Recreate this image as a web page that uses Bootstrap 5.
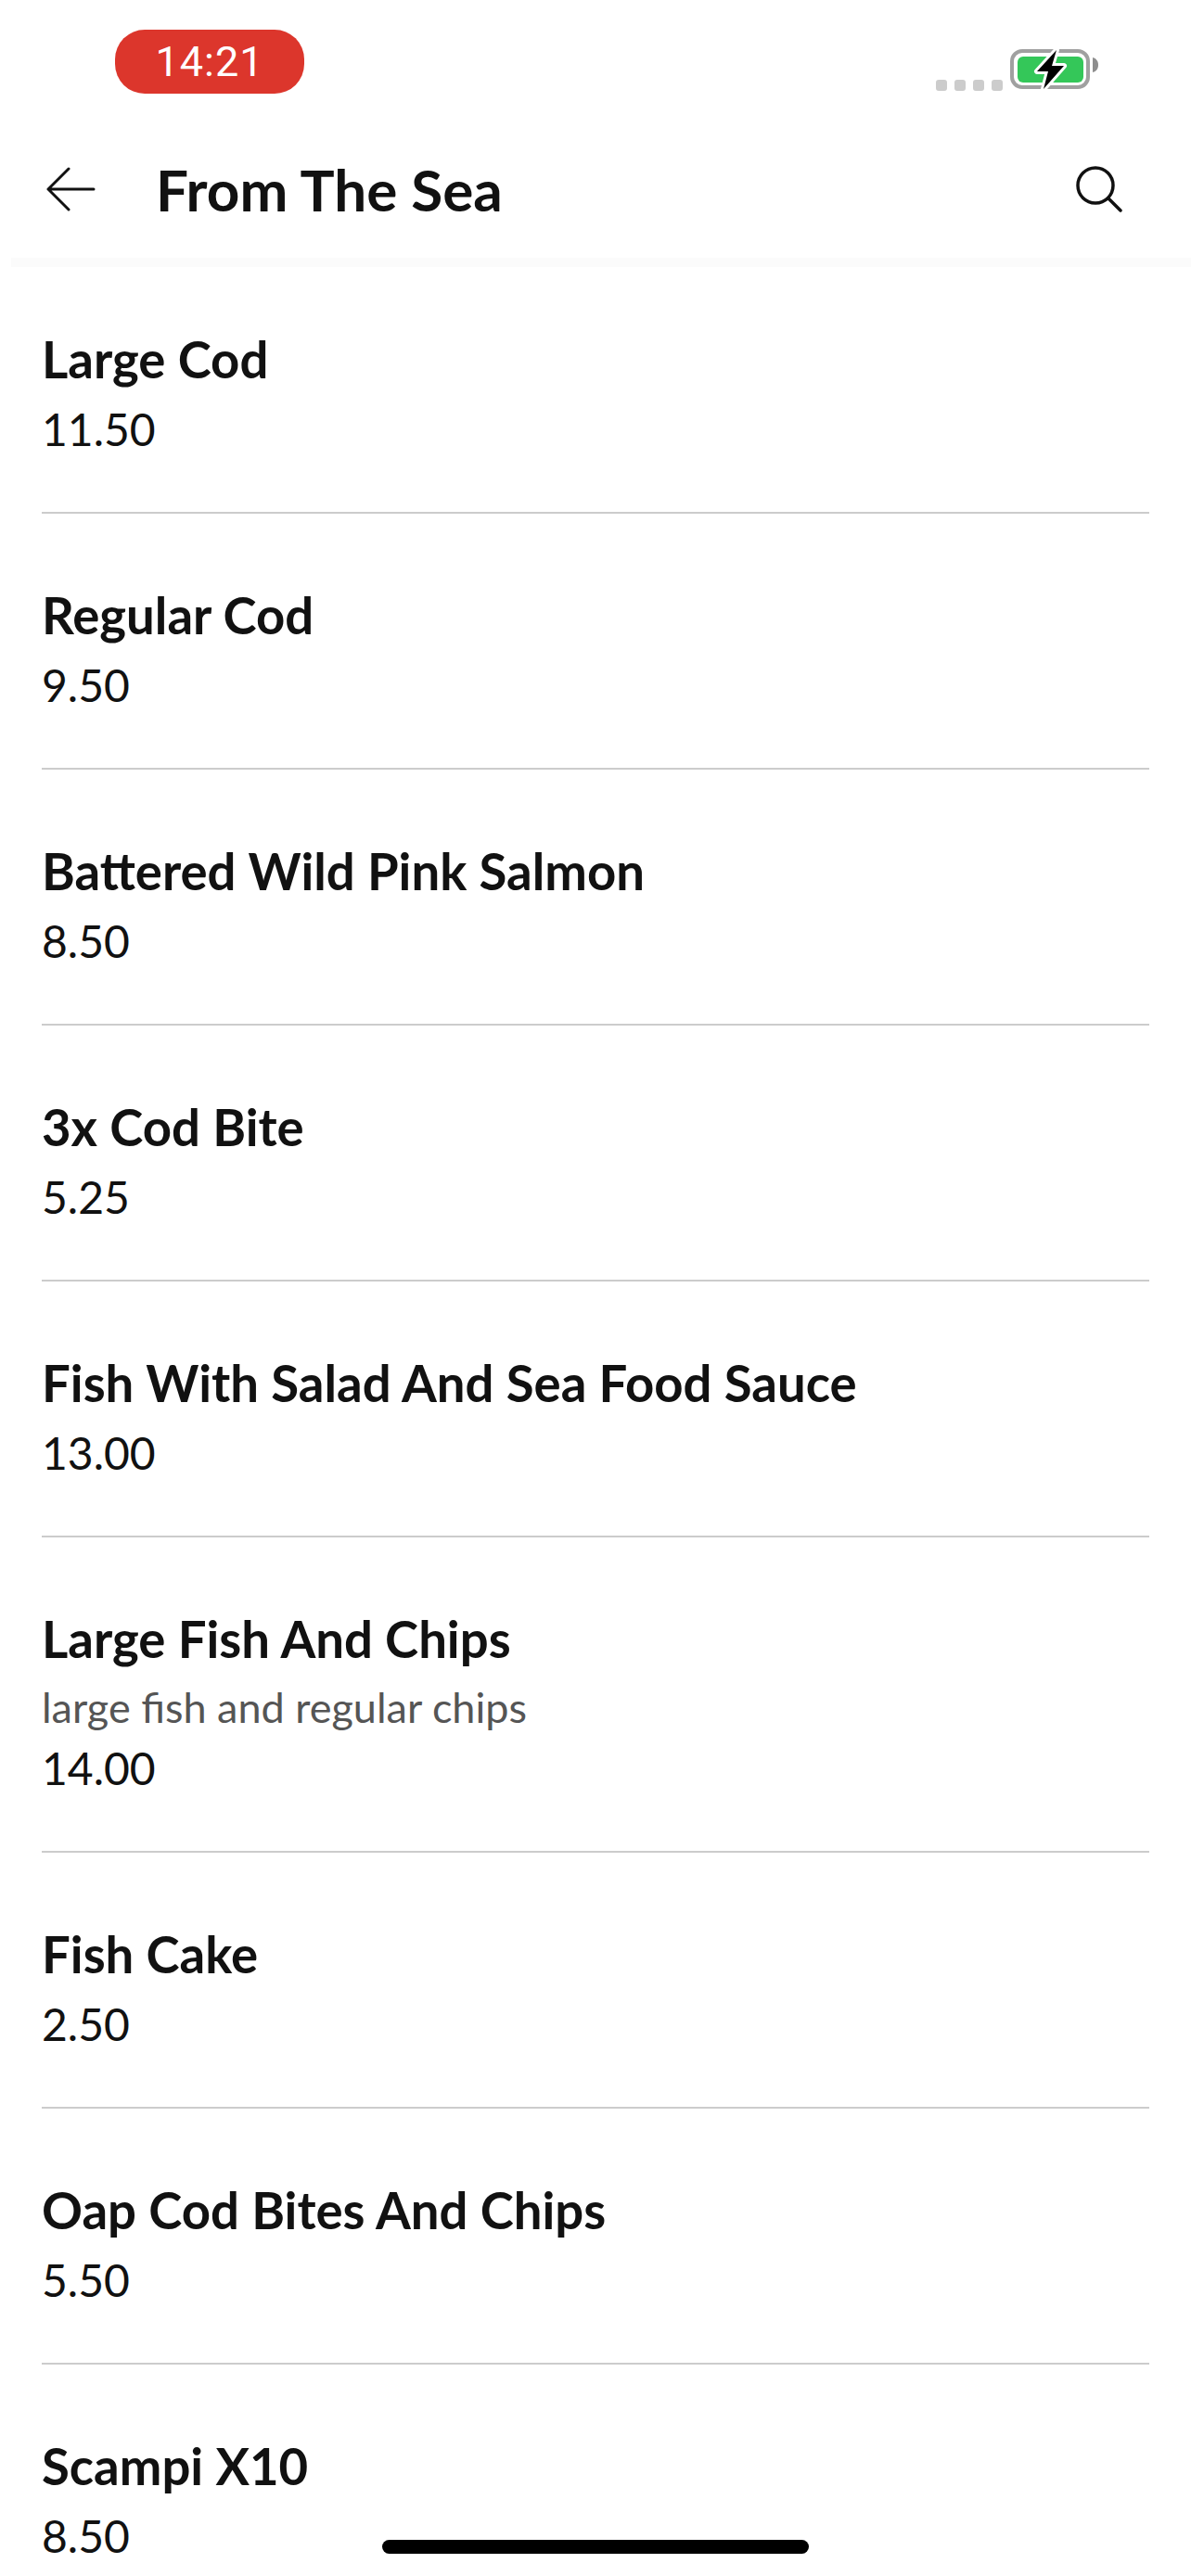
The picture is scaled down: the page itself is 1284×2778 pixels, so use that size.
<!DOCTYPE html>
<html lang="en">
<head>
  <meta charset="UTF-8" />
  <meta name="viewport" content="width=device-width, initial-scale=1">
  <title>From The Sea</title>
  <link href="https://cdn.jsdelivr.net/npm/bootstrap@5.3.0/dist/css/bootstrap.min.css" rel="stylesheet" />
  <style>
    html, body { height: 2778px; overflow: hidden; }
    body { font-family: "Lato", "Liberation Sans", sans-serif; color: #111; background: #fff; }
    .status-strip { height: 130px; padding: 32px 0 0 124px; }
    .time-pill {
      width: 204px; height: 69px; border-radius: 32px;
      background: #dc362c; color: #fff;
      font-family: "Roboto", sans-serif; font-size: 45px; letter-spacing: 1px;
    }
    .status-right { top: 52px; left: 1009px; }
    .signal-dot { width: 12px; height: 12px; border-radius: 3px; background: #ccc; }
    .signal-dots { padding-bottom: 0; margin-right: 8px; }
    .top-head { height: 148px; padding: 0 74px 0 50px; }
    .top-title { font-size: 62px; font-weight: 700; margin: 0 0 0 65px; line-height: 1; }
    .head-shade { height: 10px; margin-left: 12px; background: #fbfbfb; }
    .dish-row { margin: 0 45px; border-bottom: 2px solid #ccc; padding: 71px 0 51px; }
    .dish-row.first-row { padding-top: 61px; }
    .dish-name { font-size: 54.5px; font-weight: 700; line-height: 76px; }
    .dish-note { font-size: 45px; line-height: 64px; color: #555; margin-top: 4px; margin-bottom: -4px; }
    .dish-price { font-size: 48px; line-height: 76px; }
    .home-bar { left: 412px; top: 2739px; width: 460px; height: 15px; border-radius: 8px; background: #000; }
  </style>
</head>
<body>
  <div class="status-strip position-relative">
    <div class="time-pill d-flex align-items-center justify-content-center">14:21</div>
    <div class="status-right position-absolute d-flex align-items-end">
      <div class="signal-dots d-flex gap-2">
        <span class="signal-dot"></span><span class="signal-dot"></span><span class="signal-dot"></span><span class="signal-dot"></span>
      </div>
      <svg width="96" height="46" viewBox="0 0 96 46">
        <rect x="2" y="3" width="82" height="39" rx="11" fill="none" stroke="#a0a0a0" stroke-width="4"/>
        <rect x="8" y="9" width="71" height="28" rx="6" fill="#34c759"/>
        <path d="M89 10c4 1 6 4 6 8s-2 7-6 8z" fill="#8e8e8e"/>
        <path d="M50 2 L29 25 H41 L36 44 L58 19 H45 Z" fill="#000" stroke="#fff" stroke-width="6" stroke-linejoin="round" paint-order="stroke"/>
      </svg>
    </div>
  </div>

  <div class="top-head d-flex align-items-center">
    <svg width="53" height="48" viewBox="0 0 53 48" fill="none" stroke="#111" stroke-width="3" stroke-linecap="round" stroke-linejoin="round">
      <path d="M51 24H2M24 2 2 24l22 22"/>
    </svg>
    <h1 class="top-title">From The Sea</h1>
    <svg class="ms-auto" width="50" height="50" viewBox="0 0 50 50" fill="none" stroke="#111" stroke-width="3.5" stroke-linecap="round">
      <circle cx="21" cy="21" r="19"/><path d="M35 35l13 13"/>
    </svg>
  </div>
  <div class="head-shade"></div>

  <div id="dish-list"></div>
  <div class="home-bar position-absolute"></div>

  <script>
    const dishes = [
      ['Large Cod', '', '11.50'],
      ['Regular Cod', '', '9.50'],
      ['Battered Wild Pink Salmon', '', '8.50'],
      ['3x Cod Bite', '', '5.25'],
      ['Fish With Salad And Sea Food Sauce', '', '13.00'],
      ['Large Fish And Chips', 'large fish and regular chips', '14.00'],
      ['Fish Cake', '', '2.50'],
      ['Oap Cod Bites And Chips', '', '5.50'],
      ['Scampi X10', '', '8.50']
    ];
    document.getElementById('dish-list').innerHTML = dishes.map((d, i) => `
      <div class="dish-row ${i === 0 ? 'first-row' : ''}">
        <div class="dish-name">${d[0]}</div>
        ${d[1] ? `<div class="dish-note">${d[1]}</div>` : ''}
        <div class="dish-price">${d[2]}</div>
      </div>`).join('');
  </script>
  <script src="https://cdn.jsdelivr.net/npm/bootstrap@5.3.0/dist/js/bootstrap.bundle.min.js"></script>
</body>
</html>
